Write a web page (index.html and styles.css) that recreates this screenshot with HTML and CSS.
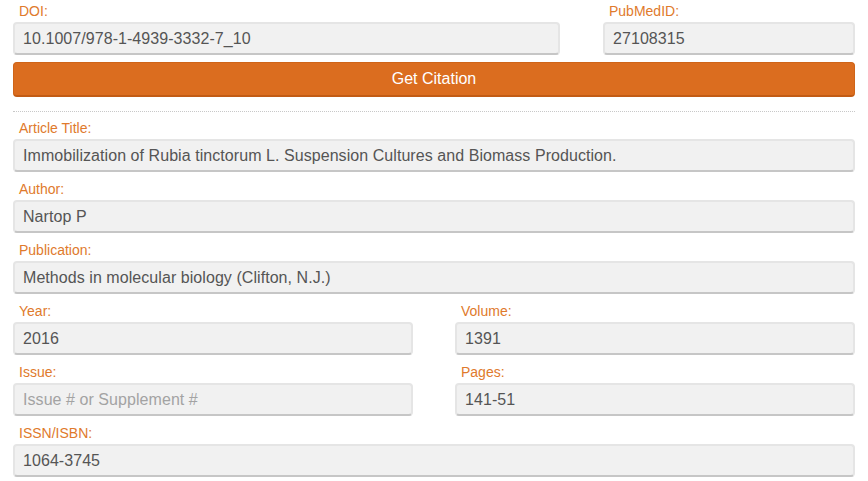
FILE: index.html
```html
<!DOCTYPE html>
<html>
<head>
<meta charset="utf-8">
<link rel="stylesheet" href="styles.css">
</head>
<body>
<div class="page">
  <div class="row top">
    <div class="field first">
      <label class="lbl">DOI:</label>
      <div class="inp">10.1007/978-1-4939-3332-7_10</div>
    </div>
    <div class="field first">
      <label class="lbl">PubMedID:</label>
      <div class="inp">27108315</div>
    </div>
  </div>
  <div class="btn">Get Citation</div>
  <div class="sep"></div>
  <div class="field">
    <label class="lbl">Article Title:</label>
    <div class="inp">Immobilization of Rubia tinctorum L. Suspension Cultures and Biomass Production.</div>
  </div>
  <div class="field">
    <label class="lbl">Author:</label>
    <div class="inp">Nartop P</div>
  </div>
  <div class="field">
    <label class="lbl">Publication:</label>
    <div class="inp">Methods in molecular biology (Clifton, N.J.)</div>
  </div>
  <div class="row half">
    <div class="field">
      <label class="lbl">Year:</label>
      <div class="inp">2016</div>
    </div>
    <div class="field">
      <label class="lbl">Volume:</label>
      <div class="inp">1391</div>
    </div>
    <div class="field">
      <label class="lbl">Issue:</label>
      <div class="inp placeholder">Issue # or Supplement #</div>
    </div>
    <div class="field">
      <label class="lbl">Pages:</label>
      <div class="inp">141-51</div>
    </div>
  </div>
  <div class="field">
    <label class="lbl">ISSN/ISBN:</label>
    <div class="inp">1064-3745</div>
  </div>
</div>
</body>
</html>
```
FILE: styles.css
```css
html, body {
  margin: 0;
  padding: 0;
  background: #fff;
}
body {
  font-family: "Liberation Sans", Arial, sans-serif;
}
.page {
  padding: 2px 13px 0 13px;
}
.row {
  display: grid;
}
.row.top {
  grid-template-columns: 547px 1fr;
  column-gap: 43px;
}
.row.half {
  grid-template-columns: 1fr 1fr;
  column-gap: 42px;
}
.field {
  margin-top: 8px;
}
.field.first {
  margin-top: 0;
}
.lbl {
  display: block;
  font-size: 14px;
  line-height: 17px;
  color: #e07a2c;
  padding-left: 6px;
  margin-bottom: 3px;
  position: relative;
  top: 1px;
}
.inp {
  box-sizing: border-box;
  height: 33px;
  background: #f1f1f1;
  border: 2px solid #e5e5e5;
  border-bottom-color: #c6c6c6;
  border-radius: 4px;
  padding: 0 8px;
  font-size: 16px;
  line-height: 29px;
  letter-spacing: 0.06px;
  color: #555;
  white-space: nowrap;
  overflow: hidden;
}
.inp.placeholder {
  color: #a3a3a3;
}
.btn {
  box-sizing: border-box;
  margin-top: 7px;
  height: 35px;
  background: #db6d1f;
  border: 1px solid #cf6418;
  border-bottom: 2px solid #c25b14;
  border-radius: 4px;
  color: #fff;
  font-size: 16px;
  line-height: 32px;
  text-align: center;
}
.sep {
  margin-top: 14px;
  border-top: 1px dotted #c8c8c8;
  margin-bottom: -1px;
}
```
